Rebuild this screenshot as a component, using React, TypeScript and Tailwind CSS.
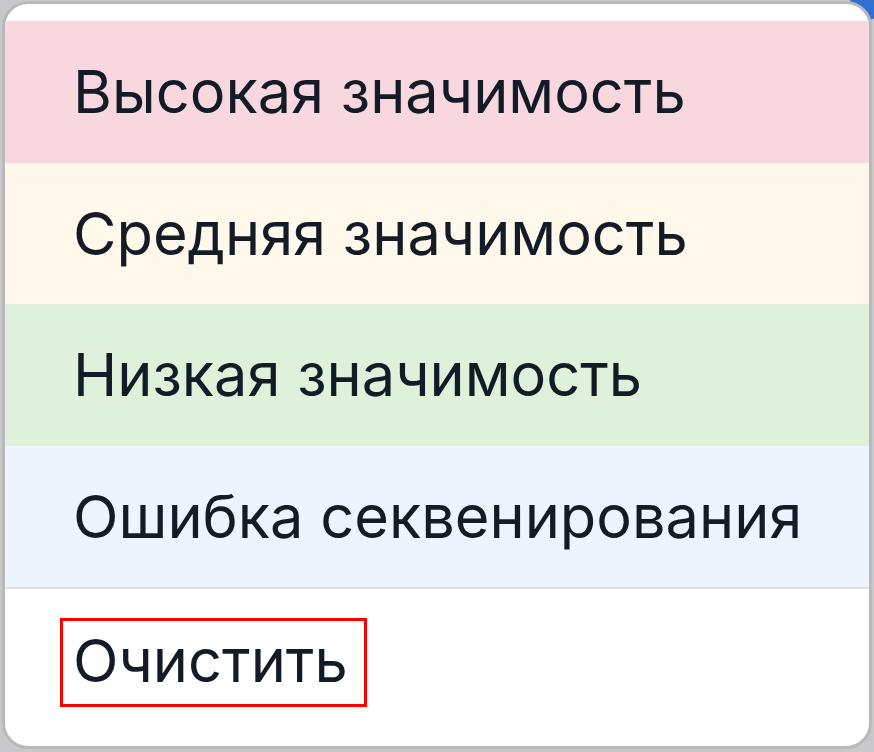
import { FC } from "react";

type Level = {
  label: string;
  bg: string;
};

const levels: Level[] = [
  { label: "Высокая значимость", bg: "bg-[#f8d8de]" },
  { label: "Средняя значимость", bg: "bg-[#fff8eb]" },
  { label: "Низкая значимость", bg: "bg-[#dff0db]" },
  { label: "Ошибка секвенирования", bg: "bg-[#eef4fe]" },
];

const Row: FC<Level> = ({ label, bg }) => (
  <div className={`flex h-[141.5px] items-center pl-[68px] ${bg}`}>
    <span>{label}</span>
  </div>
);

export default function App() {
  return (
    <div className="relative h-[752px] w-[874px] overflow-hidden bg-[#c9c9cb] pl-[2px] pr-[2px] pt-[1px]">
      {/* stuff behind the popup */}
      <div className="absolute right-[-10px] top-[-14px] h-[34px] w-[34px] rounded-full bg-[#2f6fd0]" />
      <div
        className="relative h-[748px] w-[870px] overflow-hidden rounded-[26px] border-[3px] border-[#b9b9bb] bg-white pt-[17px] text-[59.5px] leading-none text-[#131c26]"
        style={{ fontFamily: "Inter, 'Noto Sans', sans-serif" }}
      >
        {levels.map((l) => (
          <Row key={l.label} {...l} />
        ))}
        <div className="h-[2px] bg-[#dee1e6]" />
        <div className="pl-[55px] pt-[29px]">
          <button className="flex h-[89px] w-[307px] items-center border-[3px] border-[#ff0000] pl-[10px] pb-[3px] text-left">
            Очистить
          </button>
        </div>
      </div>
    </div>
  );
}
